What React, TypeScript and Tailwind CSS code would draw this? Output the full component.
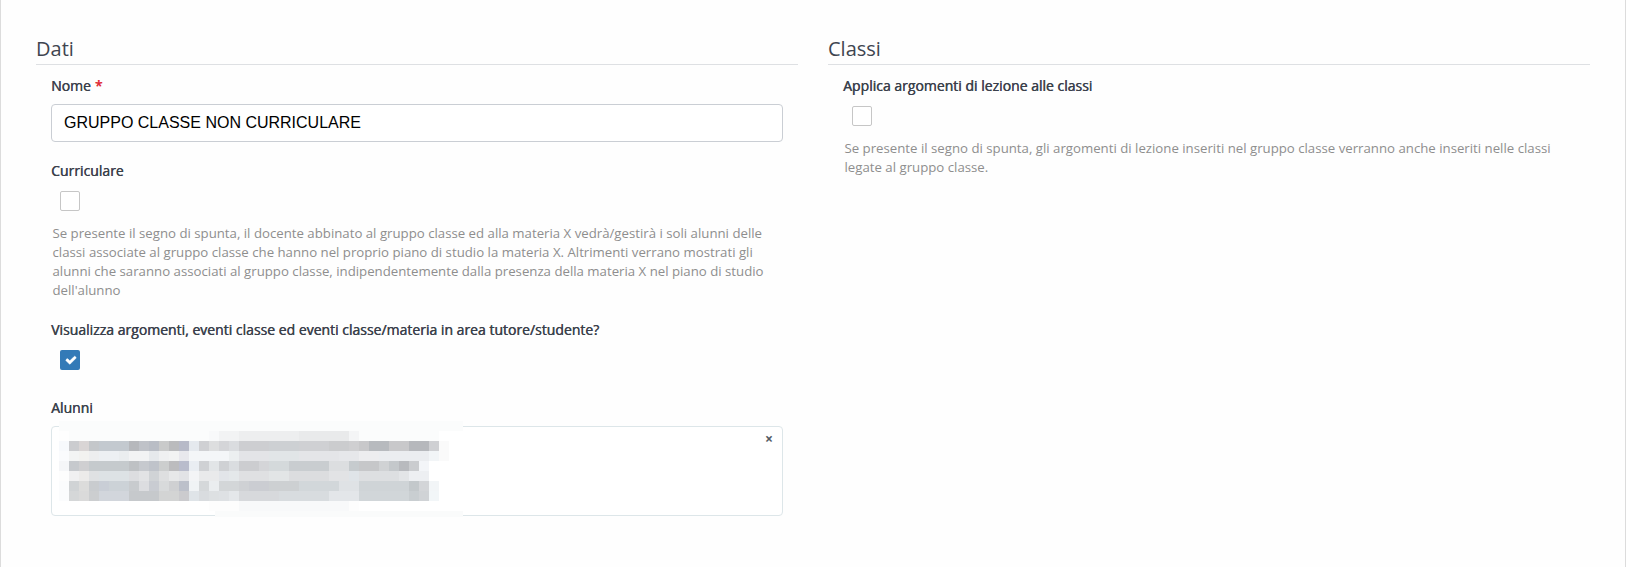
import { useState } from "react";
import type { ReactNode } from "react";

// Each row is a list of [colour, number of 10px cells]
type Run = [string, number];

const maskRows: Run[][] = [
  [["#fbfcfc", 40.4]],
  [["#fefefe", 1], ["#fbfcfc", 14], ["#f8f9fa", 1], ["#f2f3f4", 2], ["#edeeef", 6], ["#e9eaeb", 5], ["#f4f5f6", 1], ["#fbfcfc", 8]],
  [["#f7f9fc", 1], ["#cbcccf", 1], ["#d9d5d5", 1], ["#c4c7ca", 1], ["#c3c9cf", 3], ["#b6b8bc", 1], ["#bfc2c8", 1], ["#b9bdc5", 1], ["#c9caca", 1], ["#babbbd", 1], ["#b7bac8", 1], ["#e5e9ee", 1], ["#cfd0d3", 1], ["#dddedf", 1], ["#d4d5d8", 1], ["#dadcdf", 1], ["#cdced1", 3], ["#cdd0d3", 3], ["#cfd0d3", 3], ["#cbccce", 2], ["#cfcfd1", 1], ["#c8c8ca", 1], ["#b7babe", 2], ["#c8c8ca", 2], ["#b6b8bc", 2], ["#cfd0d3", 1], ["#fafafa", 1]],
  [["#fafbfd", 1], ["#f3f4f4", 1], ["#f2f2f0", 1], ["#edeeef", 1], ["#edf0f3", 2], ["#eaedef", 1], ["#f2f3f4", 2], ["#e6e9ec", 1], ["#eff0f1", 1], ["#f2f3f3", 1], ["#e8e8ed", 1], ["#f4f6f8", 4], ["#eceff0", 1], ["#e3e4e7", 3], ["#e1e5e7", 3], ["#e4e5e8", 4], ["#e6e7ea", 2], ["#ededef", 2], ["#ebedf0", 5], ["#f2f5f7", 1], ["#fafafa", 1]],
  [["#f5f6f8", 1], ["#c6c9cd", 1], ["#cfcfd1", 1], ["#c5cacd", 4], ["#bec1c4", 1], ["#c6c9ce", 1], ["#bfc3ca", 1], ["#cccece", 1], ["#bcbcbe", 1], ["#b9bccc", 1], ["#e9edf2", 1], ["#cfd1d4", 1], ["#e2e5e7", 1], ["#cfd1d4", 1], ["#dadde0", 1], ["#cccdd0", 2], ["#d4d5d8", 1], ["#d4d9db", 2], ["#c9cdd0", 4], ["#dcdee0", 2], ["#c6cbce", 1], ["#c6c7c9", 2], ["#d0d2d4", 1], ["#c4c8cb", 1], ["#b8babe", 1], ["#cacccf", 1], ["#f3f5f8", 1]],
  [["#fdfdfd", 1], ["#f0f0f1", 1], ["#ecebea", 1], ["#dfe1e3", 1], ["#dde2e5", 3], ["#dcdde0", 1], ["#e2e3e5", 1], ["#d0d3d6", 1], ["#dedfe0", 1], ["#e7e8e9", 1], ["#e2e3e6", 1], ["#f3f4f6", 1], ["#e9eaeb", 2], ["#e2e5e9", 1], ["#e4e8ea", 1], ["#dfe0e2", 3], ["#e2e5e6", 2], ["#dcdddf", 4], ["#e2e3e5", 2], ["#dfe4e8", 1], ["#dddfe1", 4], ["#e3e5e7", 1], ["#edeff2", 2]],
  [["#fbfcfd", 1], ["#d0d3d5", 1], ["#dcdcdb", 1], ["#c9cccf", 1], ["#c9ced6", 1], ["#ccd2d7", 2], ["#c8cbce", 1], ["#dcdde0", 1], ["#c9ccd2", 1], ["#d8dadb", 1], ["#cfd0d2", 1], ["#bcc0ca", 1], ["#f0f3f5", 1], ["#d5d8da", 1], ["#eaedef", 1], ["#d3d6d8", 2], ["#cfd1d4", 1], ["#cbcdd2", 2], ["#cdd0d2", 3], ["#d2d7da", 4], ["#dfe2e5", 2], ["#cfd4d7", 5], ["#c3c8cb", 1], ["#d3d5d8", 1], ["#f2f5f7", 1]],
  [["#fbfcfd", 1], ["#d5d7d8", 1], ["#dadada", 1], ["#ccced0", 1], ["#d2d6dc", 3], ["#c6c9cc", 3], ["#d3d4d4", 2], ["#cbcbce", 1], ["#dfe4e8", 1], ["#d9dcdf", 1], ["#dde0e2", 1], ["#dee1e4", 1], ["#e4e7ea", 1], ["#d7d9dc", 4], ["#d8dcdf", 5], ["#e3e6e9", 3], ["#d1d6d9", 5], ["#c9ced1", 1], ["#d0d3d6", 1], ["#f2f6f8", 1]],
  [["#ffffff", 15], ["#fdfdfd", 3], ["#f8f9fa", 11], ["#fdfdfd", 1], ["#ffffff", 9]],
];

const PixelMask = () => (
  <div className="absolute -top-1.5 left-[7px] flex w-[404px] flex-col">
    {maskRows.map((row, i) => (
      <div key={i} className="flex h-2.5">
        {row.map(([color, cells], j) => (
          <div key={j} style={{ background: color, width: cells * 10 }} />
        ))}
      </div>
    ))}
    <div className="ml-[156px] h-1.5 bg-[#fafbfb]" />
  </div>
);

const Section = ({ title, children }: { title: string; children: ReactNode }) => (
  <section className="w-[762px]">
    <h2 className="h-[29px] border-b border-[#dee0e3] text-[20px] leading-[25px] text-[#3f4550]">
      {title}
    </h2>
    <div className="px-[15px] pt-[11px]">{children}</div>
  </section>
);

const FieldLabel = ({ text, required }: { text: string; required?: boolean }) => (
  <div className="h-5 text-[14px] leading-5 text-[#3a404b] [text-shadow:0.4px_0_0_#3a404b]">
    {text}
    {required && (
      <span className="ml-1 text-[#e02b35] [text-shadow:0.4px_0_0_#e02b35]">*</span>
    )}
  </div>
);

const CheckBox = ({ defaultChecked = false }: { defaultChecked?: boolean }) => {
  const [checked, setChecked] = useState(defaultChecked);

  return (
    <button
      type="button"
      role="checkbox"
      aria-checked={checked}
      onClick={() => setChecked(!checked)}
      className={
        checked
          ? "ml-[9px] flex size-5 items-center justify-center rounded-[2px] bg-[#337ab7]"
          : "ml-[9px] flex size-5 items-center justify-center rounded-[2px] border border-[#c6c6c6] bg-white"
      }
    >
      {checked && (
        <svg
          viewBox="0 0 1792 1792"
          className="ml-px size-3"
          fill="white"
          stroke="white"
          strokeWidth="70"
        >
          <path d="M1671 566q0 40-28 68l-724 724-136 136q-28 28-68 28t-68-28l-136-136-362-362q-28-28-28-68t28-68l136-136q28-28 68-28t68 28l294 295 656-657q28-28 68-28t68 28l136 136q28 28 28 68z" />
        </svg>
      )}
    </button>
  );
};

const HelpText = ({ lines }: { lines: string[] }) => (
  <div className="ml-[1.5px] mt-[13px] pb-px text-[13.22px] leading-[19px] text-[#8e8e8e]">
    {lines.map((line) => (
      <p key={line} className="whitespace-nowrap">
        {line}
      </p>
    ))}
  </div>
);

const App = () => {
  const [name, setName] = useState("GRUPPO CLASSE NON CURRICULARE");

  return (
    <div className="flex h-[567px] w-[1626px] gap-[30px] border-x border-[#dcdcdc] bg-[#fefefe] pl-[35px] pt-9 font-['Open_Sans',sans-serif]">
      <Section title="Dati">
        <FieldLabel text="Nome" required />
        <input
          value={name}
          onChange={(e) => setName(e.target.value)}
          className="mt-[8px] block h-[38px] w-full rounded-[4px] border border-[#caced4] bg-white px-3 font-['Liberation_Sans',Arial,sans-serif] text-[16px] text-black outline-none"
        />
        <div className="mt-[19px]">
          <FieldLabel text="Curriculare" />
          <div className="mt-[10px]">
            <CheckBox />
          </div>
          <HelpText
            lines={[
              "Se presente il segno di spunta, il docente abbinato al gruppo classe ed alla materia X vedrà/gestirà i soli alunni delle",
              "classi associate al gruppo classe che hanno nel proprio piano di studio la materia X. Altrimenti verrano mostrati gli",
              "alunni che saranno associati al gruppo classe, indipendentemente dalla presenza della materia X nel piano di studio",
              "dell'alunno",
            ]}
          />
        </div>
        <div className="mt-[19px]">
          <FieldLabel text="Visualizza argomenti, eventi classe ed eventi classe/materia in area tutore/studente?" />
          <div className="mt-[10px]">
            <CheckBox defaultChecked />
          </div>
        </div>
        <div className="mt-7">
          <FieldLabel text="Alunni" />
          <div className="relative mt-2 flex h-[90px] justify-end rounded-[4px] border border-[#dde6e9] bg-white pr-[9px] pt-[3px]">
            <PixelMask />
            <button
              type="button"
              className="h-[18px] font-['Open_Sans',sans-serif] text-[14px] font-bold leading-[18px] text-[#555b66]"
            >
              ×
            </button>
          </div>
        </div>
      </Section>
      <Section title="Classi">
        <FieldLabel text="Applica argomenti di lezione alle classi" />
        <div className="mt-[10px]">
          <CheckBox />
        </div>
        <HelpText
          lines={[
            "Se presente il segno di spunta, gli argomenti di lezione inseriti nel gruppo classe verranno anche inseriti nelle classi",
            "legate al gruppo classe.",
          ]}
        />
      </Section>
    </div>
  );
};

export default App;
